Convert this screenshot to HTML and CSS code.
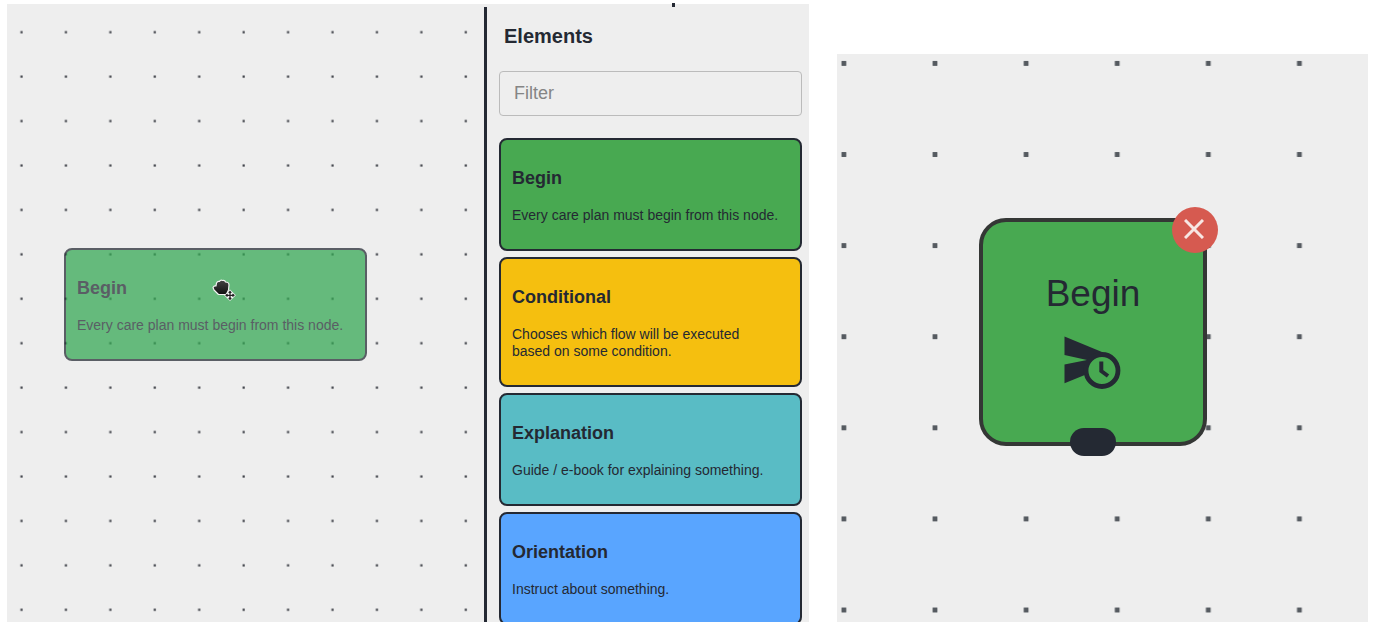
FILE: index.html
```html
<!DOCTYPE html>
<html lang="en">
<head>
<meta charset="utf-8">
<title>Care plan editor</title>
<link rel="stylesheet" href="styles.css">
</head>
<body>
<main class="views">
  <section class="editor">
    <div class="canvas">
      <svg class="grid" aria-hidden="true">
        <defs>
          <pattern id="dots-small" width="44.43" height="44.43" patternUnits="userSpaceOnUse">
            <rect x="13.4" y="27.1" width="2.2" height="2.2" fill="#3c3f46"/>
          </pattern>
        </defs>
        <rect width="100%" height="100%" fill="url(#dots-small)"/>
      </svg>
      <article class="card card-ghost">
        <h3 class="card-title">Begin</h3>
        <p class="card-text">Every care plan must begin from this node.</p>
      </article>
      <svg class="cursor" viewBox="0 0 26 24" aria-hidden="true">
        <defs>
          <linearGradient id="hand" x1="0" y1="0" x2="0" y2="1">
            <stop offset="0" stop-color="#444"/>
            <stop offset="1" stop-color="#111"/>
          </linearGradient>
        </defs>
        <path d="M2 9.500Q3 7.500 5 8L5.500 5Q6.500 3 8.500 3.500Q9.500 1.500 11.500 2.500Q14 2 14.500 4Q18 4 18 7L17.500 12L15.500 16.500H7.500L3 12Z" fill="url(#hand)" stroke="#f2f2f2" stroke-width="1.200" stroke-linejoin="round"/>
        <path d="M19 11.500L24.800 17.300L19 23.100L13.200 17.300Z" fill="#f6f6f6"/>
        <path d="M19 13.500V21.100M15.200 17.300H22.800M17.700 14.800L19 13.300L20.300 14.800M17.700 19.800L19 21.300L20.300 19.800M16.500 16L15 17.300L16.500 18.600M21.500 16L23 17.300L21.500 18.600" fill="none" stroke="#222" stroke-width="1.200"/>
      </svg>
    </div>
    <aside class="palette">
      <h2 class="palette-title">Elements</h2>
      <input class="filter" type="text" placeholder="Filter" aria-label="Filter">
      <div class="card-list">
        <article class="card card-begin">
          <h3 class="card-title">Begin</h3>
          <p class="card-text">Every care plan must begin from this node.</p>
        </article>
        <article class="card card-conditional">
          <h3 class="card-title">Conditional</h3>
          <p class="card-text">Chooses which flow will be executed based on some condition.</p>
        </article>
        <article class="card card-explanation">
          <h3 class="card-title">Explanation</h3>
          <p class="card-text">Guide / e-book for explaining something.</p>
        </article>
        <article class="card card-orientation">
          <h3 class="card-title">Orientation</h3>
          <p class="card-text">Instruct about something.</p>
        </article>
      </div>
    </aside>
    <span class="top-mark"></span>
  </section>
  <section class="closeup">
    <svg class="grid" aria-hidden="true">
      <defs>
        <pattern id="dots-large" width="91.1" height="91.1" patternUnits="userSpaceOnUse">
          <rect x="4.500" y="7" width="4.800" height="4.800" rx="0.500" fill="#555a60"/>
        </pattern>
      </defs>
      <rect width="100%" height="100%" fill="url(#dots-large)"/>
    </svg>
    <div class="node">
      <span class="node-title">Begin</span>
      <svg class="node-icon" viewBox="0 0 58 54" aria-hidden="true">
        <path d="M0.500 0.500L38 16V36L22 38.500L0.500 47.200V28.500L23 24L0.500 19Z" fill="#242933"/>
        <circle cx="38" cy="34.500" r="16" fill="#48a951" stroke="#242933" stroke-width="4.800"/>
        <path d="M37.300 25.500V35L44 40" fill="none" stroke="#242933" stroke-width="4"/>
      </svg>
      <button class="node-close" type="button" aria-label="Remove node">
        <svg class="close-icon" viewBox="0 0 20 20" aria-hidden="true"><path d="M1 1L19 19M19 1L1 19" stroke="#f7e6e3" stroke-width="3"/></svg>
      </button>
      <span class="node-handle"></span>
    </div>
  </section>
</main>
</body>
</html>
```
FILE: styles.css
```css
* {
  box-sizing: border-box;
}

body {
  margin: 0;
  background: #fff;
  color: #242933;
  font-family: "Liberation Sans", Arial, sans-serif;
}

.views {
  display: flex;
  gap: 28px;
  height: 100vh;
  padding: 4px 9px 8px 7px;
}

.editor {
  position: relative;
  display: flex;
  flex: 802 1 0;
  min-width: 0;
  background: #eee;
}

.canvas {
  position: relative;
  flex: 1;
  overflow: hidden;
}

.grid {
  position: absolute;
  inset: 0;
  width: 100%;
  height: 100%;
}

.palette {
  width: 325px;
  margin-top: 3px;
  padding: 16px 7px 0 12px;
  border-left: 3px solid #242933;
  overflow: hidden;
}

.palette-title {
  margin: 0 5px 21px;
  font-size: 20px;
  line-height: 27px;
}

.filter {
  display: block;
  width: 100%;
  height: 45px;
  margin-bottom: 22px;
  padding: 0 14px;
  border: 1px solid #bbb;
  border-radius: 4px;
  background: transparent;
  color: inherit;
  font: 18px "Liberation Sans", Arial, sans-serif;
}

.filter::placeholder {
  color: #858585;
}

.card-list {
  display: flex;
  flex-direction: column;
  gap: 6px;
}

.card {
  padding: 27px 20px 25px 11px;
  border: 2px solid #242933;
  border-radius: 8px;
}

.card-title {
  margin: 0 0 18px;
  font-size: 18px;
  line-height: 22px;
}

.card-text {
  margin: 0;
  font-size: 14px;
  line-height: 17px;
}

.card-begin {
  background: #48a951;
}

.card-conditional {
  background: #f5bf0f;
}

.card-explanation {
  background: #59bcc5;
}

.card-orientation {
  background: #59a5ff;
}

.card-ghost {
  position: absolute;
  top: 244px;
  left: 57px;
  width: 303px;
  background: #33a752;
  opacity: 0.73;
}

.cursor {
  position: absolute;
  top: 274px;
  left: 204px;
  width: 26px;
  height: 24px;
}

.top-mark {
  position: absolute;
  top: -1px;
  right: 134px;
  width: 3px;
  height: 4px;
  background: #242933;
}

.closeup {
  position: relative;
  flex: 531 1 0;
  min-width: 0;
  margin-top: 50px;
  overflow: hidden;
  background: #eee;
}

.node {
  position: absolute;
  top: 164px;
  left: 142px;
  display: flex;
  flex-direction: column;
  align-items: center;
  gap: 20px;
  width: 228px;
  height: 228px;
  padding-top: 50px;
  border: 4px solid #343735;
  border-radius: 27px;
  background: #48a951;
}

.node-title {
  font-size: 37px;
  line-height: 44px;
}

.node-icon {
  width: 58px;
  height: 54px;
}

.node-close {
  position: absolute;
  top: -15px;
  right: -15px;
  display: grid;
  place-items: center;
  width: 46px;
  height: 46px;
  padding: 0 2px 2px 0;
  border: 0;
  border-radius: 50%;
  background: #d65a50;
}

.close-icon {
  width: 20px;
  height: 20px;
}

.node-handle {
  position: absolute;
  bottom: -14px;
  left: 87px;
  width: 46px;
  height: 28px;
  border-radius: 14px;
  background: #242933;
}
```
